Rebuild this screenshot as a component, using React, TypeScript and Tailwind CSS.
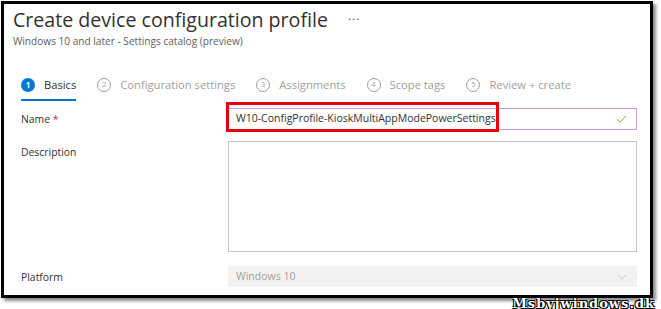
import { Check, ChevronDown } from 'lucide-react';

type Step = {
  num: number;
  label: string;
  active?: boolean;
};

const steps: Step[] = [
  { num: 1, label: 'Basics', active: true },
  { num: 2, label: 'Configuration settings' },
  { num: 3, label: 'Assignments' },
  { num: 4, label: 'Scope tags' },
  { num: 5, label: 'Review + create' }
];

function StepItem({ step }: { step: Step }) {
  return (
    <div className="flex flex-col">
      <div className="flex items-center gap-[9px] h-[24px]">
        {step.active ? (
          <span className="flex items-center justify-center w-[14px] h-[14px] rounded-full bg-[#0078d4] text-white text-[8px] font-bold">
            {step.num}
          </span>
        ) : (
          <span className="flex items-center justify-center w-[14px] h-[14px] rounded-full border border-[#a19f9d] text-[#a19f9d] text-[7px]">
            {step.num}
          </span>
        )}
        <span
          className={
            step.active
              ? 'text-[11.2px] text-[#323130]'
              : 'text-[11.2px] text-[#a19f9d]'
          }
        >
          {step.label}
        </span>
      </div>
      <div
        className={
          step.active ? 'h-[2px] mt-[2px] bg-[#0078d4]' : 'h-[2px] mt-[2px]'
        }
      />
    </div>
  );
}

export default function App() {
  return (
    <div
      className="relative w-[661px] h-[309px] bg-white overflow-hidden"
      style={{ fontFamily: '"Open Sans", "Noto Sans", sans-serif' }}
    >
      <div className="ml-[1px] mt-[1px] w-[652px] h-[297px] border-[3px] border-black bg-white shadow-[3px_3px_3px_rgba(0,0,0,0.45)] overflow-hidden">
        {/* header */}
        <div className="pl-[9px] pt-[1px]">
          <div className="flex items-center">
            <h1 className="text-[19.6px] leading-[30px] text-[#323130]">
              Create device configuration profile
            </h1>
            <span className="ml-[20px] mb-[8px] text-[12px] text-[#605e5c] tracking-[1px]">
              ...
            </span>
          </div>
          <p className="text-[10.1px] leading-[12px] text-[#605e5c]">
            Windows 10 and later - Settings catalog (preview)
          </p>
        </div>

        {/* steps */}
        <div className="flex gap-[21px] pl-[17px] mt-[26px]">
          {steps.map((s) => (
            <StepItem key={s.num} step={s} />
          ))}
        </div>

        {/* form */}
        <div className="grid grid-cols-[207px_409px] pl-[17px] mt-[7px] text-[10.4px] text-[#323130]">
          <div className="pt-[4px]">
            Name <span className="text-[#c4314b]">*</span>
          </div>
          <div className="relative">
            <div className="flex items-center h-[22px] border border-[#c79be0] pl-[7px] pr-[8px]">
              <span className="flex-1 text-[10.5px]">
                W10-ConfigProfile-KioskMultiAppModePowerSettings
              </span>
              <Check size={13} strokeWidth={1.5} className="text-[#57a300]" />
            </div>
            <div className="absolute left-[-2px] top-[-6px] w-[273px] h-[30px] border-[3px] border-[#e8000b]" />
          </div>

          <div className="pt-[4px] mt-[11px]">Description</div>
          <div className="h-[111px] mt-[11px] border border-[#c8c6c4]" />

          <div className="pt-[4px] mt-[14px]">Platform</div>
          <div className="flex items-center h-[21px] mt-[14px] bg-[#f3f2f1] pl-[8px] pr-[8px]">
            <span className="flex-1 text-[10.5px] text-[#a19f9d]">
              Windows 10
            </span>
            <ChevronDown size={14} strokeWidth={1} className="text-[#a19f9d]" />
          </div>
        </div>
      </div>

      {/* watermark */}
      <div
        className="absolute right-[6px] bottom-[-4px] text-[13px] font-bold text-white tracking-[1px]"
        style={{
          fontFamily: '"DejaVu Serif", serif',
          textShadow:
            '1px 1px 0 #000, -1px -1px 0 #000, 1px -1px 0 #000, -1px 1px 0 #000'
        }}
      >
        Msbyjwindows.dk
      </div>
    </div>
  );
}
